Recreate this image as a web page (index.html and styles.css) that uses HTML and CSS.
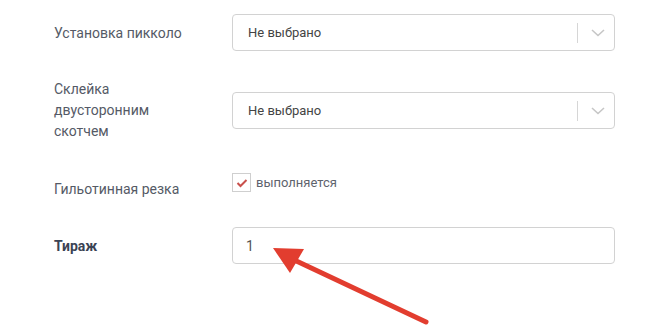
FILE: index.html
```html
<!DOCTYPE html>
<html lang="ru">

<head>
    <meta charset="UTF-8">
    <meta name="viewport" content="width=device-width, initial-scale=1.0">
    <title>Параметры</title>
    <link rel="stylesheet" href="styles.css">
</head>

<body>
    <form class="params">
        <div class="row row-first">
            <label class="row-label">Установка пикколо</label>
            <div class="select">
                <span class="select-value">Не выбрано</span>
                <span class="select-sep"></span>
                <svg class="select-arrow" width="14" height="8" viewBox="0 0 14 8">
                    <path d="M1 1l6 5.5L13 1" fill="none" stroke="#c6c6c6" stroke-width="1.6"/>
                </svg>
            </div>
        </div>
        <div class="row row-tall">
            <label class="row-label label-multi">Склейка<br>двусторонним<br>скотчем</label>
            <div class="select">
                <span class="select-value">Не выбрано</span>
                <span class="select-sep"></span>
                <svg class="select-arrow" width="14" height="8" viewBox="0 0 14 8">
                    <path d="M1 1l6 5.5L13 1" fill="none" stroke="#c6c6c6" stroke-width="1.6"/>
                </svg>
            </div>
        </div>
        <div class="row row-check">
            <label class="row-label label-low">Гильотинная резка</label>
            <div class="check">
                <span class="check-box">
                    <svg width="12" height="10" viewBox="0 0 12 10">
                        <path d="M1.5 5l3 3L10.5 2" fill="none" stroke="#c9504c" stroke-width="2"/>
                    </svg>
                </span>
                <span class="check-text">выполняется</span>
            </div>
        </div>
        <div class="row row-qty">
            <label class="row-label label-bold">Тираж</label>
            <div class="input">1</div>
        </div>
    </form>

    <svg class="pointer" width="672" height="334" viewBox="0 0 672 334">
        <line x1="426" y1="322" x2="290" y2="258" stroke="#e23d2f" stroke-width="5" stroke-linecap="round"/>
        <polygon points="273,248 304,249 290,273" fill="#e23d2f"/>
    </svg>
</body>

</html>
```

FILE: styles.css
```css
body {
    font-family: Roboto, "Liberation Sans", sans-serif;
    background-color: #ffffff;
    margin: 0;
    width: 672px;
    height: 334px;
    overflow: hidden;
    position: relative;
}

.params {
    padding: 14px 0 0 54px;
}

.row {
    display: flex;
    align-items: center;
}

.row-label {
    width: 178px;
    flex-shrink: 0;
    font-size: 14px;
    line-height: 20px;
    color: #555a66;
}

.label-multi {
    line-height: 21px;
}

.label-bold {
    font-weight: bold;
    color: #3b4354;
}

.row-tall {
    margin-top: 28px;
}

.row-check {
    margin-top: 31px;
    align-items: flex-start;
}

.label-low {
    padding-top: 6px;
}

.row-qty {
    margin-top: 28px;
}

.select {
    width: 383px;
    height: 37px;
    box-sizing: border-box;
    border: 1px solid #d2d2d2;
    border-radius: 4px;
    display: flex;
    align-items: center;
    padding: 0 8px 0 15px;
}

.select-value {
    flex: 1;
    font-size: 13px;
    color: #444444;
}

.select-sep {
    width: 1px;
    height: 20px;
    background-color: #d6d6d6;
    margin-right: 13px;
}

.select-arrow {
    margin-right: 1px;
}

.check {
    display: flex;
    align-items: center;
    gap: 5px;
}

.check-box {
    width: 19px;
    height: 19px;
    box-sizing: border-box;
    border: 1px solid #cfcfcf;
    display: flex;
    align-items: center;
    justify-content: center;
}

.check-text {
    font-size: 13px;
    color: #5e636d;
}

.input {
    width: 383px;
    height: 37px;
    box-sizing: border-box;
    border: 1px solid #d2d2d2;
    border-radius: 4px;
    padding: 0 13px;
    display: flex;
    align-items: center;
    font-size: 14px;
    color: #555555;
}

.pointer {
    position: absolute;
    left: 0;
    top: 0;
}
```
